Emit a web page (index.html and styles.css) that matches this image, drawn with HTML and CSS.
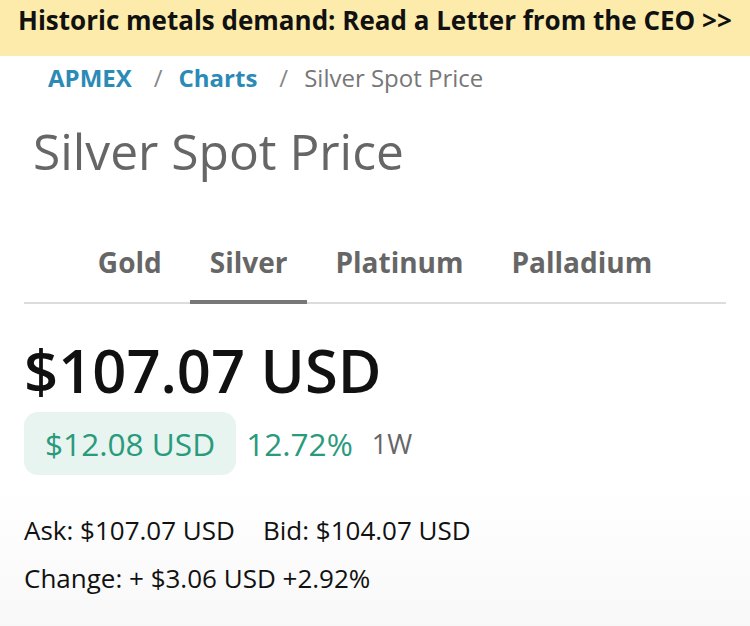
FILE: index.html
```html
<!DOCTYPE html>
<html lang="en">
<head>
<meta charset="utf-8">
<title>Silver Spot Price</title>
<link rel="stylesheet" href="styles.css">
</head>
<body>
<div class="banner"><a class="banner-link" href="#">Historic metals demand: Read a Letter from the CEO &gt;&gt;</a></div>
<nav class="breadcrumb">
  <a class="crumb-link" href="#">APMEX</a>
  <span class="sep">/</span>
  <a class="crumb-link" href="#">Charts</a>
  <span class="sep">/</span>
  <span class="crumb-current">Silver Spot Price</span>
</nav>
<h1 class="title">Silver Spot Price</h1>
<div class="tabs">
  <a class="tab" href="#">Gold</a>
  <a class="tab active" href="#">Silver</a>
  <a class="tab" href="#">Platinum</a>
  <a class="tab" href="#">Palladium</a>
</div>
<div class="price">$107.07 USD</div>
<div class="change-row">
  <span class="pill">$12.08 USD</span>
  <span class="pct">12.72%</span>
  <span class="period">1W</span>
</div>
<div class="details">
  <div class="line"><span>Ask: $107.07 USD</span><span>Bid: $104.07 USD</span></div>
  <div class="line">Change: + $3.06 USD +2.92%</div>
</div>
</body>
</html>
```
FILE: styles.css
```css
html, body {
  margin: 0;
  padding: 0;
}
body {
  font-family: "Open Sans", "Noto Sans", sans-serif;
  background: linear-gradient(#ffffff 0, #ffffff 480px, #f8f8f8 626px);
  min-height: 626px;
  color: #111;
}
a { text-decoration: none; }

.banner {
  background: #fcebaa;
  height: 56px;
  box-sizing: border-box;
  padding: 3px 0 0 18px;
}
.banner-link {
  color: #111;
  font-weight: 700;
  font-size: 26px;
  line-height: 34px;
}

.breadcrumb {
  margin-top: 6px;
  padding-left: 48px;
  font-size: 24px;
  line-height: 32px;
  display: flex;
}
.crumb-link {
  color: #2b8ab6;
  font-weight: 700;
}
.sep {
  color: #888;
  margin: 0 16px 0 22px;
}
.crumb-current { color: #777; }

.title {
  margin: 27px 0 0 33px;
  font-size: 49.7px;
  line-height: 60px;
  font-weight: 500;
  color: #666;
}

.tabs {
  margin: 61px 24px 0;
  display: flex;
  justify-content: center;
  gap: 8px;
  border-bottom: 2px solid #dcdcdc;
}
.tab {
  font-size: 28px;
  line-height: 40px;
  font-weight: 700;
  color: #666;
  padding: 0 20px 18px;
  border-bottom: 4px solid transparent;
  margin-bottom: -2px;
}
.tab.active { border-bottom-color: #777; }

.price {
  margin: 31px 0 0 24px;
  font-size: 59.7px;
  line-height: 70px;
  font-weight: 600;
  color: #111;
}

.change-row {
  margin: 7px 0 0 24px;
  display: flex;
  align-items: center;
  color: #2a9a7c;
  font-size: 31.6px;
}
.pill {
  background: #e7f4ef;
  border-radius: 14px;
  height: 63px;
  display: flex;
  align-items: center;
  padding: 0 21px;
}
.pct { margin-left: 10px; }
.period {
  margin-left: 19px;
  color: #666;
  font-size: 27px;
}

.details {
  margin: 31px 0 0 24px;
  font-size: 26px;
  line-height: 48px;
  color: #111;
}
.line {
  display: flex;
  gap: 28px;
}
```
